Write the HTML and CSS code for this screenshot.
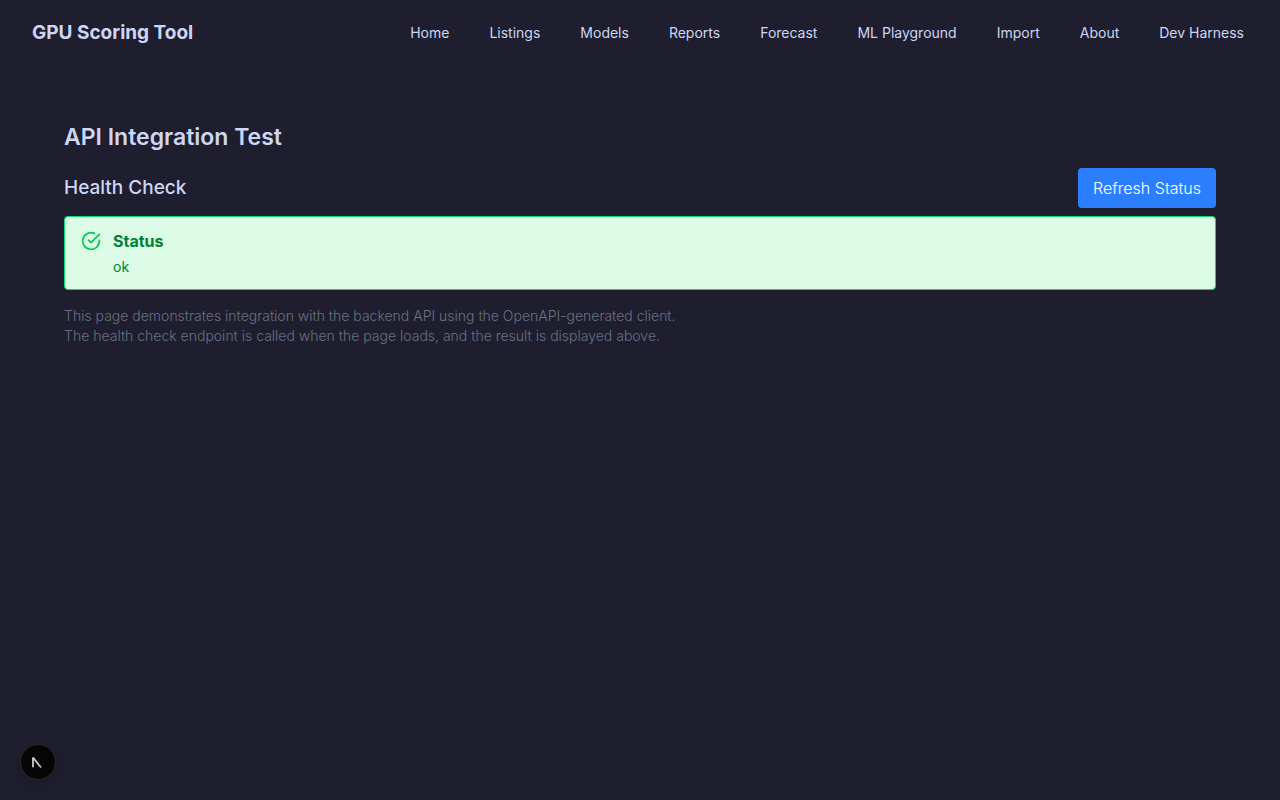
FILE: index.html
```html
<!DOCTYPE html>
<html lang="en">
<head>
<meta charset="utf-8">
<meta name="viewport" content="width=device-width, initial-scale=1">
<title>GPU Scoring Tool</title>
<link rel="stylesheet" href="styles.css">
</head>
<body>
<header class="site-header">
  <a class="brand" href="#">GPU Scoring Tool</a>
  <nav class="nav" aria-label="Main">
    <a class="nav-link" href="#">Home</a>
    <a class="nav-link" href="#">Listings</a>
    <a class="nav-link" href="#">Models</a>
    <a class="nav-link" href="#">Reports</a>
    <a class="nav-link" href="#">Forecast</a>
    <a class="nav-link" href="#">ML Playground</a>
    <a class="nav-link" href="#">Import</a>
    <a class="nav-link" href="#">About</a>
    <a class="nav-link" href="#">Dev Harness</a>
  </nav>
</header>
<main class="page">
  <h1 class="page-title">API Integration Test</h1>
  <section class="health">
    <div class="health-head">
      <h2 class="health-title">Health Check</h2>
      <button class="refresh" type="button">Refresh Status</button>
    </div>
    <div class="status" role="status">
      <svg class="status-icon" viewBox="0 0 24 24" fill="none" stroke="currentColor" stroke-width="2" stroke-linecap="round" stroke-linejoin="round" aria-hidden="true">
        <path d="M22 11.08V12a10 10 0 1 1-5.93-9.14"/>
        <path d="M22 4 12 14.01l-3-3"/>
      </svg>
      <div class="status-body">
        <h3 class="status-title">Status</h3>
        <p class="status-text">ok</p>
      </div>
    </div>
  </section>
  <div class="notes">
    <p class="note">This page demonstrates integration with the backend API using the OpenAPI-generated client.</p>
    <p class="note">The health check endpoint is called when the page loads, and the result is displayed above.</p>
  </div>
</main>
<button class="dev-badge" type="button" aria-label="Open developer tools">
  <svg class="dev-icon" viewBox="0 0 36 36" fill="none" aria-hidden="true">
    <defs>
      <linearGradient id="fade" x1="13" y1="13" x2="22" y2="24" gradientUnits="userSpaceOnUse">
        <stop offset="0.6" stop-color="#fff" stop-opacity="0.8"/>
        <stop offset="1" stop-color="#fff" stop-opacity="0.6"/>
      </linearGradient>
    </defs>
    <path d="M12.7 23.5V13.2L21.3 24" stroke="url(#fade)" stroke-width="1.9" stroke-linejoin="bevel"/>
  </svg>
</button>
</body>
</html>
```
FILE: styles.css
```css
* {
  box-sizing: border-box;
  margin: 0;
}

body {
  min-height: 100vh;
  background: #1e1e2e;
  color: #cdd6f4;
  font-family: Inter, "Liberation Sans", sans-serif;
  font-size: 16px;
  line-height: 24px;
}

.site-header {
  display: flex;
  align-items: center;
  justify-content: space-between;
  min-height: 65px;
  padding: 0 32px;
  box-shadow: 0 1px 2px rgba(0, 0, 0, 0.12);
}

.brand {
  color: inherit;
  font-size: 19px;
  font-weight: 700;
  line-height: 28px;
  text-decoration: none;
}

.nav {
  display: flex;
  gap: 32px;
}

.nav-link {
  padding: 4px;
  color: inherit;
  font-size: 14px;
  font-weight: 400;
  line-height: 20px;
  text-decoration: none;
}

.page {
  padding: 56px 64px;
}

.page-title {
  margin-bottom: 15px;
  font-size: 23px;
  font-weight: 600;
  line-height: 32px;
}

.health-head {
  display: flex;
  align-items: center;
  justify-content: space-between;
  margin-bottom: 8px;
}

.health-title {
  font-size: 19px;
  font-weight: 500;
  line-height: 28px;
}

.refresh {
  padding: 8px 15px;
  border: 0;
  border-radius: 4px;
  background: #2b7fff;
  color: #fff;
  font: inherit;
  font-weight: 300;
}

.status {
  display: flex;
  gap: 12px;
  padding: 12px 16px;
  border: 1px solid #05df72;
  border-radius: 4px;
  background: #dcfce7;
  color: #008236;
}

.status-icon {
  width: 20px;
  height: 20px;
  margin-top: 2px;
  color: #00c950;
}

.status-title {
  font-size: 16px;
  font-weight: 700;
  line-height: 24px;
}

.status-text {
  margin-top: 4px;
  font-size: 14px;
  line-height: 20px;
}

.notes {
  margin-top: 16px;
  color: #6a7282;
  font-size: 14px;
  font-weight: 300;
  line-height: 20px;
}

.dev-badge {
  position: fixed;
  bottom: 20px;
  left: 20px;
  width: 36px;
  height: 36px;
  padding: 0;
  border: 1px solid #2a2a2e;
  border-radius: 50%;
  background: #050506;
  box-shadow: 0 4px 12px rgba(0, 0, 0, 0.15);
}

.dev-icon {
  display: block;
  width: 34px;
  height: 34px;
}
```
